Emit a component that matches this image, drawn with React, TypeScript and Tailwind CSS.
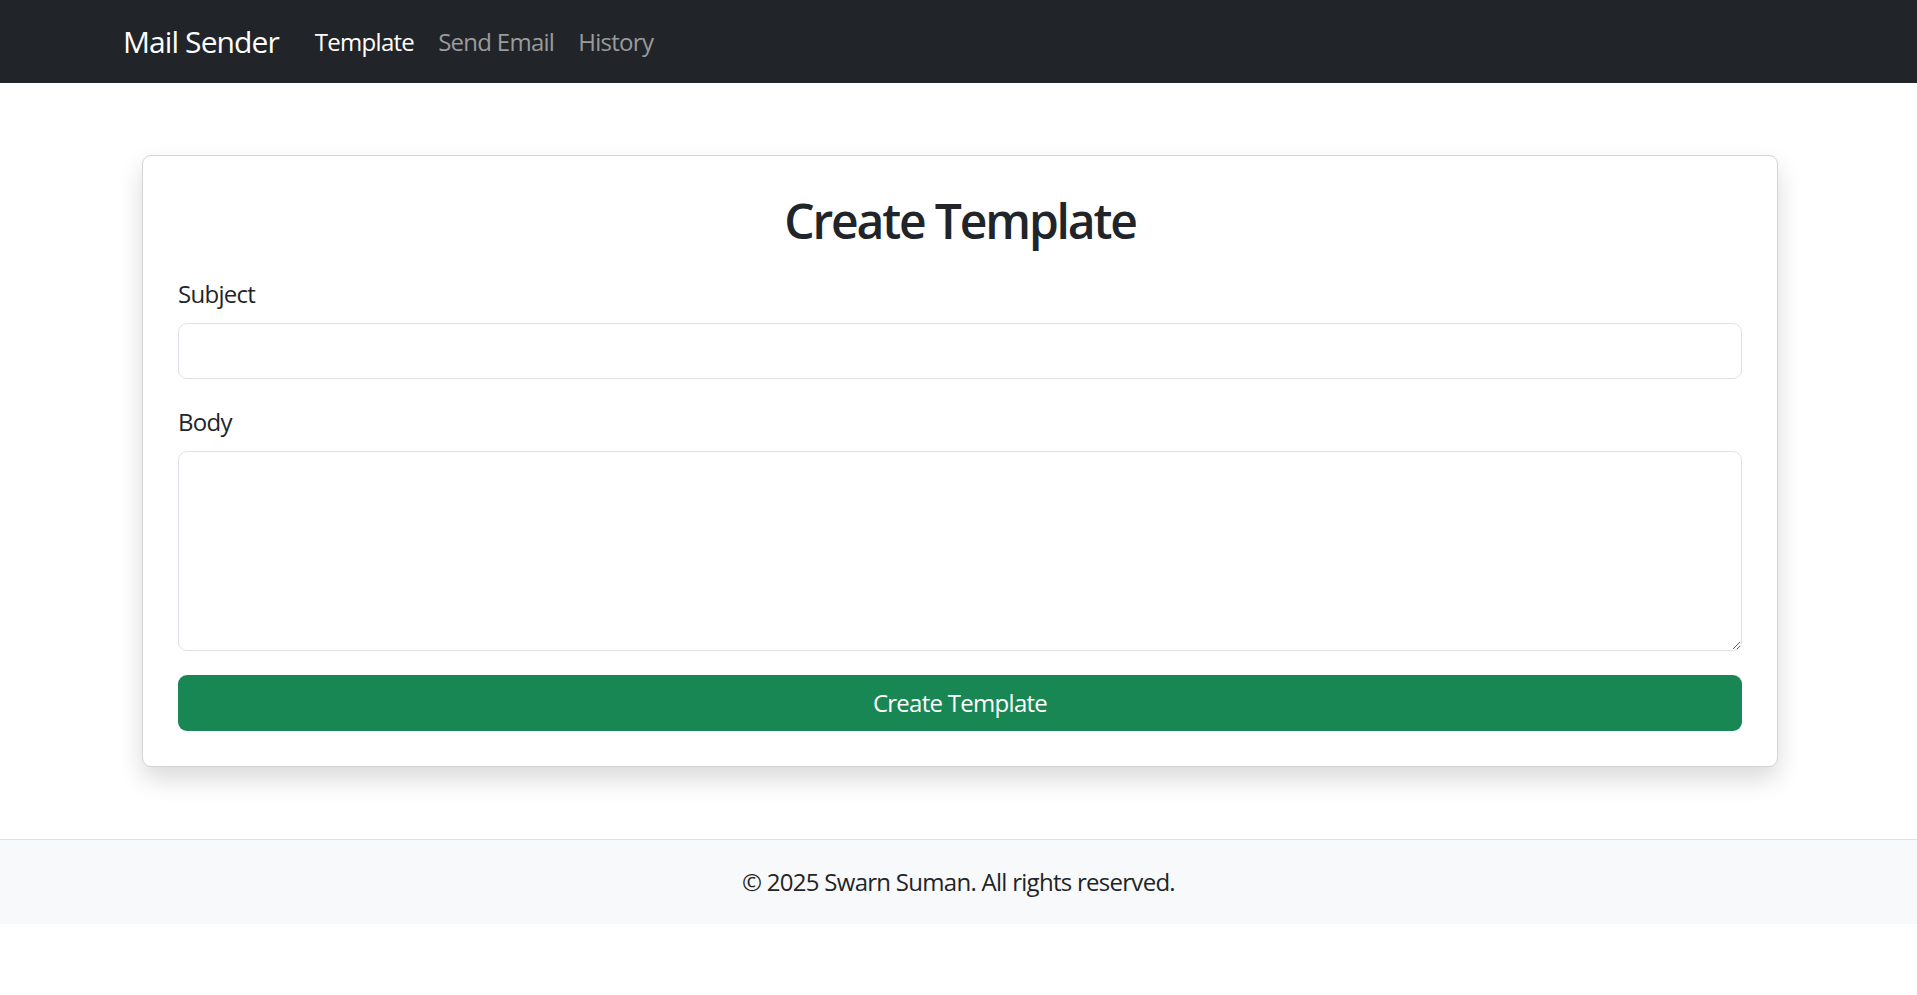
import { useState } from 'react';

const font = { fontFamily: '"Open Sans", "Noto Sans", sans-serif' };

function NavBar() {
  const links = ['Template', 'Send Email', 'History'];
  return (
    <nav className="h-[83px] bg-[#212529] flex items-center pl-[123px]">
      <span className="text-[30px] leading-[45px] text-white tracking-[-0.03em] mr-[24px]">Mail Sender</span>
      <ul className="flex items-center">
        {links.map((l, i) => (
          <li key={l}>
            <a
              href="#"
              className={
                'block px-[12px] text-[24px] leading-[36px] tracking-[-0.03em] ' +
                (i === 0 ? 'text-white' : 'text-[#999b9d]')
              }
            >
              {l}
            </a>
          </li>
        ))}
      </ul>
    </nav>
  );
}

function Footer() {
  return (
    <footer className="mt-[72px] border-t border-[#dee2e6] bg-[#f8f9fa] py-[24px] text-center">
      <p className="text-[24px] leading-[36px] text-[#212529] tracking-[-0.03em]">
        © 2025 Swarn Suman. All rights reserved.
      </p>
    </footer>
  );
}

export default function App() {
  const [subject, setSubject] = useState('');
  const [body, setBody] = useState('');

  return (
    <div className="min-h-screen bg-white text-[#212529]" style={font}>
      <NavBar />
      <main className="pl-[142px] pr-[139px] pt-[72px]">
        <div className="rounded-[9px] border border-[#d3d4d5] bg-white p-[35px] shadow-[0_12px_24px_rgba(0,0,0,0.15)]">
          <h2 className="h-[60px] text-center text-[48px] leading-[60px] font-semibold tracking-[-0.045em] mb-[25px]">
            Create Template
          </h2>
          <form onSubmit={(e) => e.preventDefault()}>
            <label className="block text-[24px] leading-[36px] tracking-[-0.03em] mb-[11px]">Subject</label>
            <input
              value={subject}
              onChange={(e) => setSubject(e.target.value)}
              className="block w-full h-[56px] rounded-[9px] border border-[#dee2e6] px-[18px] text-[24px] outline-none mb-[25px]"
            />
            <label className="block text-[24px] leading-[36px] tracking-[-0.03em] mb-[11px]">Body</label>
            <textarea
              value={body}
              onChange={(e) => setBody(e.target.value)}
              className="block w-full h-[200px] rounded-[9px] border border-[#dee2e6] px-[18px] py-[9px] text-[24px] outline-none mb-[24px]"
            />
            <button
              type="submit"
              className="block w-full h-[56px] rounded-[9px] bg-[#198754] text-white text-[24px] tracking-[-0.03em]"
            >
              Create Template
            </button>
          </form>
        </div>
      </main>
      <Footer />
    </div>
  );
}
